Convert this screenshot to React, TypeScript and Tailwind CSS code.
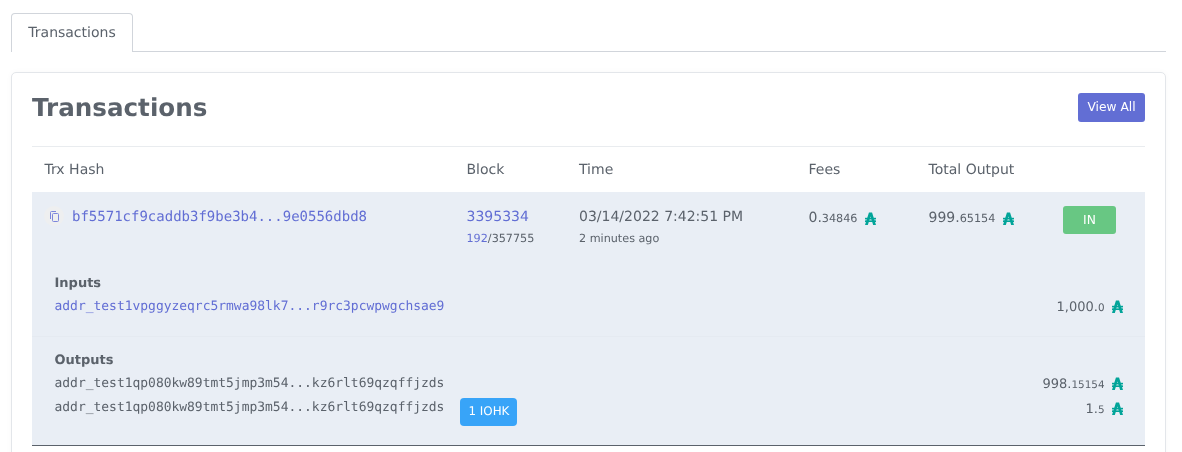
const ADA = ({ className = "" }: { className?: string }) => (
  <svg width="11" height="13" viewBox="0 0 12 13" preserveAspectRatio="none" className={`inline-block self-center ${className}`} fill="#02a499">
    <path d="M4.3 0.5h3.4L12 13H8.9L6 4.5 3.1 13H0z" />
    <rect x="0" y="5.8" width="12" height="1.6" />
    <rect x="0" y="8.4" width="12" height="1.6" />
  </svg>
);

const Amount = ({ whole, frac, small = false }: { whole: string; frac: string; small?: boolean }) => (
  <span className="inline-flex items-baseline text-[#5b626b]">
    <span className={small ? "text-[13px]" : "text-[14px]"}>{whole}</span>
    <span className={small ? "text-[10.4px]" : "text-[11.2px]"}>{frac}</span>
    <ADA className={small ? "ml-[7px] mt-[-3px]" : "ml-[8px] mt-[0px]"} />
  </span>
);

const CopyIcon = () => (
  <svg width="9" height="11" viewBox="0 0 9 11" fill="none" stroke="#7c86dc" strokeWidth="1">
    <path d="M0.5 8V1.5a1 1 0 0 1 1-1H6" />
    <rect x="2.5" y="2.5" width="6" height="8" rx="1" />
  </svg>
);

export default function App() {
  return (
    <div className="h-[452px] w-[1182px] overflow-hidden bg-white pl-[11px] pr-[16px] pt-[13px] text-[#5b626b] [font-family:'DejaVu_Sans',sans-serif] [text-rendering:geometricPrecision] [will-change:transform]">
      <div className="h-[39px] border-b border-[#d1d5db]">
        <div className="flex h-[39px] w-[122px] items-center justify-center rounded-t-[4px] border border-b-0 border-[#d1d5db] bg-white text-[14px]">
          Transactions
        </div>
      </div>
      <div className="mt-[20px] h-[500px] rounded-[5px] border border-[#e3e6ea] bg-white px-[20px] shadow-[0_0_6px_rgba(0,0,0,0.03)]">
        <div className="flex h-[73px] items-center justify-between">
          <h2 className="mt-[-3px] text-[24.6px] font-bold">Transactions</h2>
          <button className="mt-[-5px] h-[29px] w-[67px] rounded-[3px] bg-[#626ed4] text-[12.25px] text-white">View All</button>
        </div>
        <div className="flex h-[46px] items-center border-t border-[#e9ecef] pt-[1px] text-[14px]">
          <div className="w-[434.5px] pl-[12.5px]">Trx Hash</div>
          <div className="w-[112.5px]">Block</div>
          <div className="w-[229.5px]">Time</div>
          <div className="w-[120px]">Fees</div>
          <div>Total Output</div>
        </div>
        <div className="h-[254px] border-b border-[#5b626b] bg-[#e9eef5]">
          <div className="flex h-[69px] pt-[14px]">
            <div className="flex w-[434.5px] items-start pl-[12px]">
              <span className="flex h-[20px] w-[20px] items-center justify-center rounded-full bg-[#eeeff0]"><CopyIcon /></span>
              <a className="ml-[8px] pt-[1px] text-[14px] leading-[21px] text-[#626ed4] [font-family:'DejaVu_Sans_Mono',monospace]">bf5571cf9caddb3f9be3b4...9e0556dbd8</a>
            </div>
            <div className="w-[112.5px]">
              <div className="pt-[1px] text-[14px] leading-[21px] text-[#626ed4]">3395334</div>
              <div className="mt-[2px] text-[11.2px] leading-[17px]"><span className="text-[#626ed4]">192</span>/357755</div>
            </div>
            <div className="w-[229.5px]">
              <div className="pt-[1px] text-[14px] leading-[21px]">03/14/2022 7:42:51 PM</div>
              <div className="mt-[2px] text-[11.2px] leading-[17px]">2 minutes ago</div>
            </div>
            <div className="w-[120px] leading-[21px]"><Amount whole="0." frac="34846" /></div>
            <div className="w-[134.5px] leading-[21px]"><Amount whole="999." frac="65154" /></div>
            <button className="h-[28px] w-[53px] rounded-[3px] bg-[#68c783] text-[12.25px] text-white">IN</button>
          </div>
          <div className="h-[76px] border-b border-[#e5eaf1] px-[22.5px] pt-[14px]">
            <div className="text-[13px] font-bold leading-[18px]">Inputs</div>
            <div className="mt-[3px] flex items-center justify-between">
              <a className="text-[12.96px] leading-[20px] text-[#626ed4] [font-family:'DejaVu_Sans_Mono',monospace]">addr_test1vpggyzeqrc5rmwa98lk7...r9rc3pcwpwgchsae9</a>
              <span className="mt-[-2px]"><Amount small whole="1,000." frac="0" /></span>
            </div>
          </div>
          <div className="px-[22.5px] pt-[15px]">
            <div className="text-[13px] font-bold leading-[18px]">Outputs</div>
            <div className="mt-[3px] flex items-center justify-between">
              <span className="text-[12.96px] leading-[20px] [font-family:'DejaVu_Sans_Mono',monospace]">addr_test1qp080kw89tmt5jmp3m54...kz6rlt69qzqffjzds</span>
              <span className="mt-[-2px]"><Amount small whole="998." frac="15154" /></span>
            </div>
            <div className="mt-[3px] flex items-start justify-between">
              <div className="flex items-start">
                <span className="text-[12.96px] leading-[20px] [font-family:'DejaVu_Sans_Mono',monospace]">addr_test1qp080kw89tmt5jmp3m54...kz6rlt69qzqffjzds</span>
                <span className="ml-[16px] flex h-[28px] w-[57px] items-center justify-center rounded-[4px] bg-[#38a4f8] text-[11.9px] text-white">1 IOHK</span>
              </div>
              <span className="mt-[-2px]"><Amount small whole="1." frac="5" /></span>
            </div>
          </div>
        </div>
      </div>
    </div>
  );
}
